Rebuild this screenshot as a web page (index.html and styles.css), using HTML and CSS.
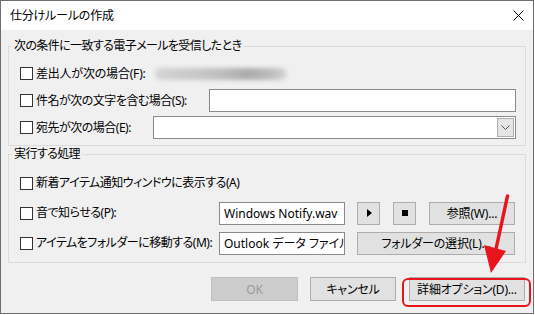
FILE: index.html
```html
<!DOCTYPE html>
<html lang="ja">
<head>
<meta charset="utf-8">
<title>仕分けルールの作成</title>
<link rel="stylesheet" href="styles.css">
</head>
<body>
<div class="window">
  <div class="titlebar">
    <span class="title">仕分けルールの作成</span>
    <svg class="close" viewBox="0 0 11 11" width="11" height="11"><path d="M0.5 0.5 L10.5 10.5 M10.5 0.5 L0.5 10.5" stroke="#000" stroke-width="1"/></svg>
  </div>
  <div class="content">
    <fieldset class="group g1">
      <legend>次の条件に一致する電子メールを受信したとき</legend>
      <div class="row">
        <label class="chk lbl-f"><span class="box"></span>差出人が次の場合(F):</label>
        <div class="blur"></div>
      </div>
      <div class="row">
        <label class="chk"><span class="box"></span>件名が次の文字を含む場合(S):</label>
        <div class="field field-s"></div>
      </div>
      <div class="row">
        <label class="chk"><span class="box"></span>宛先が次の場合(E):</label>
        <div class="field combo"><span class="drop"><svg viewBox="0 0 9 5" width="9" height="5"><path d="M0.5 0.5 L4.5 4.5 L8.5 0.5" fill="none" stroke="#555" stroke-width="1"/></svg></span></div>
      </div>
    </fieldset>
    <fieldset class="group g2">
      <legend>実行する処理</legend>
      <div class="row">
        <label class="chk"><span class="box"></span>新着アイテム通知ウィンドウに表示する(A)</label>
      </div>
      <div class="row">
        <label class="chk lbl-2"><span class="box"></span>音で知らせる(P):</label>
        <div class="field text">Windows Notify.wav</div>
        <button class="btn icon play"><span class="tri"></span></button>
        <button class="btn icon stop"><span class="sq"></span></button>
        <button class="btn browse">参照(W)...</button>
      </div>
      <div class="row">
        <label class="chk lbl-2"><span class="box"></span>アイテムをフォルダーに移動する(M):</label>
        <div class="field text">Outlook データ ファイルの受信トレイ</div>
        <button class="btn folder">フォルダーの選択(L)...</button>
      </div>
    </fieldset>
    <div class="buttons">
      <button class="btn ok" disabled>OK</button>
      <button class="btn cancel">キャンセル</button>
      <button class="btn adv">詳細オプション(D)...</button>
    </div>
  </div>
  <svg class="annot" viewBox="0 0 535 315" width="535" height="315">
    <rect x="403" y="279" width="127" height="27" rx="5" ry="5" fill="none" stroke="#e8161c" stroke-width="2"/>
    <path d="M507.5 196 L496 249" stroke="#e8161c" stroke-width="3.5" fill="none" stroke-linecap="round"/>
    <polygon points="484,245 506,251 491,273" fill="#e8161c"/>
  </svg>
</div>
</body>
</html>
```
FILE: styles.css
```css
* { box-sizing: border-box; }
html, body { margin: 0; padding: 0; background: #ffffff; }
body {
  font-family: "Noto Sans", "Noto Sans CJK JP", sans-serif;
  font-size: 12px;
  color: #000;
  font-feature-settings: "palt" 1;
}
.window {
  position: relative;
  width: 534px;
  height: 314px;
  border: 1px solid #6e6e6e;
  background: #f0f0f0;
  overflow: hidden;
}
.titlebar {
  height: 29px;
  background: #ffffff;
  display: flex;
  align-items: center;
  justify-content: space-between;
  padding: 0 9px 0 9px;
}
.title { line-height: 16px; letter-spacing: -0.2px; }
.close { display: block; }
.content { padding: 8px 7px 0 7px; }
fieldset.group {
  margin: 0;
  min-width: 0;
  border: 1px solid #dcdcdc;
  padding: 6px 9px 4px 3px;
}
legend {
  padding: 0 2px;
  line-height: 16px;
  letter-spacing: -0.6px;
}
.g2 { margin-top: 4px; }
.row {
  display: flex;
  align-items: center;
  margin-left: 8px;
  white-space: nowrap;
}
.g1 .row { height: 27px; }
.g2 .row { height: 30px; }
.chk {
  display: flex;
  align-items: center;
  line-height: 16px;
  letter-spacing: -0.5px;
}
.box {
  width: 13px;
  height: 13px;
  border: 1px solid #333;
  background: #fff;
  margin-right: 3px;
  flex: none;
}
.lbl-f { width: 135px; letter-spacing: -0.2px; }
.lbl-2 { width: 199px; flex: none; }
.blur {
  width: 132px;
  height: 12px;
  border-radius: 6px;
  background: linear-gradient(90deg, #d4d4d4, #c8c8c8 30%, #bababa 55%, #ababab 70%, #bcbcbc 88%, #d6d6d6);
  filter: blur(2px);
}
.field {
  background: #fff;
  border: 1px solid #8a8a8a;
  height: 23px;
}
.field-s { width: 307px; margin-left: auto; }
.combo {
  width: 363px;
  margin-left: auto;
  display: flex;
  justify-content: flex-end;
  padding: 1px;
}
.drop {
  width: 17px;
  height: 19px;
  background: #e5e5e5;
  border: 1px solid #adadad;
  display: flex;
  align-items: center;
  justify-content: center;
}
.drop svg { display: block; }
.text {
  width: 126px;
  flex: none;
  padding: 0 3px 0 4px;
  line-height: 21px;
  overflow: hidden;
}
.btn {
  font: inherit;
  color: #000;
  background: #e1e1e1;
  border: 1px solid #adadad;
  height: 23px;
  padding: 0;
  margin: 0;
  display: flex;
  align-items: center;
  justify-content: center;
  white-space: nowrap;
  letter-spacing: -0.2px;
}
.icon { width: 23px; flex: none; }
.play { margin-left: 12px; }
.stop { margin-left: 13px; }
.browse { width: 86px; margin-left: 13px; flex: none; }
.folder { width: 158px; margin-left: 12px; flex: none; }
.tri {
  width: 0;
  height: 0;
  border-top: 4.5px solid transparent;
  border-bottom: 4.5px solid transparent;
  border-left: 5px solid #000;
  margin-left: 1px;
}
.sq { width: 6px; height: 6px; background: #000; }
.buttons {
  display: flex;
  justify-content: flex-end;
  margin-top: 14px;
  padding-right: 1px;
}
.buttons .btn { height: 24px; }
.ok {
  width: 87px;
  background: #cccccc;
  border-color: #bfbfbf;
  color: #9a9a9a;
}
.cancel { width: 86px; margin-left: 12px; }
.adv { width: 116px; margin-left: 13px; }
.annot {
  position: absolute;
  left: -1px;
  top: -1px;
  pointer-events: none;
}
```
